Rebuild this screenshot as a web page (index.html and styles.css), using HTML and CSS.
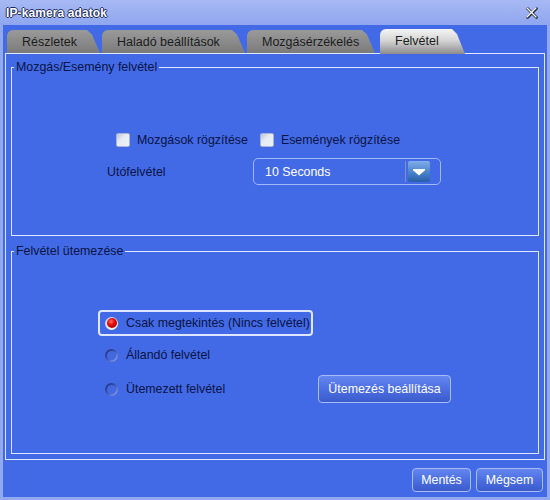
FILE: index.html
```html
<!DOCTYPE html>
<html lang="hu">
<head>
<meta charset="utf-8">
<title>IP-kamera adatok</title>
<link rel="stylesheet" href="styles.css">
</head>
<body>
<div class="window">
  <div class="titlebar">
    <span class="title">IP-kamera adatok</span>
    <svg class="close" width="12" height="12" viewBox="0 0 12 12">
      <path d="M1.5 1.5 L10.5 10.5 M10.5 1.5 L1.5 10.5" stroke="#1a1f3a" stroke-width="2.6" stroke-linecap="round"/>
      <path d="M1 1 L10 10 M10 1 L1 10" stroke="#ffffff" stroke-width="1.3" stroke-linecap="round"/>
    </svg>
  </div>
  <div class="client">
    <div class="tabs">
      <div class="tab tab-1">Részletek</div>
      <div class="tab tab-2">Haladó beállítások</div>
      <div class="tab tab-3">Mozgásérzékelés</div>
      <div class="tab tab-4 active">Felvétel</div>
    </div>
    <div class="panel">
      <fieldset class="group group-motion">
        <legend>Mozgás/Esemény felvétel</legend>
        <div class="check-row">
          <label class="check"><span class="box"></span>Mozgások rögzítése</label>
          <label class="check"><span class="box"></span>Események rögzítése</label>
        </div>
        <div class="select-row">
          <span class="select-label">Utófelvétel</span>
          <div class="select">
            <span class="select-value">10 Seconds</span>
            <span class="select-sep"></span>
            <span class="select-btn">
              <svg width="22" height="21" viewBox="0 0 22 21"><polygon points="5,8 17,8 17,9.2 11,14.5 5,9.2" fill="#ffffff"/></svg>
            </span>
          </div>
        </div>
      </fieldset>
      <fieldset class="group group-schedule">
        <legend>Felvétel ütemezése</legend>
        <div class="radios">
          <div class="radio-item focused"><span class="radio checked"></span>Csak megtekintés (Nincs felvétel)</div>
          <div class="radio-item"><span class="radio"></span>Állandó felvétel</div>
          <div class="radio-row">
            <div class="radio-item"><span class="radio"></span>Ütemezett felvétel</div>
            <button class="btn btn-schedule">Ütemezés beállítása</button>
          </div>
        </div>
      </fieldset>
    </div>
    <div class="actions">
      <button class="btn btn-save">Mentés</button>
      <button class="btn btn-cancel">Mégsem</button>
    </div>
  </div>
</div>
</body>
</html>
```
FILE: styles.css
```css
* { box-sizing: border-box; }
html, body { margin: 0; padding: 0; }
body {
  font-family: "Liberation Sans", Arial, sans-serif;
  font-size: 12.4px;
  color: #0a1445;
  background: #93a9ef;
}
.window {
  width: 550px;
  height: 500px;
  background: #93a9ef;
  padding: 0 3px 3px 3px;
  display: flex;
  flex-direction: column;
}
.titlebar {
  height: 25px;
  flex: none;
  display: flex;
  align-items: center;
  justify-content: space-between;
  background: linear-gradient(#a7b9f4, #8fa6ef);
  margin: 0 -3px;
  padding-left: 6px;
  padding-right: 12px;
}
.title {
  color: #ffffff;
  font-weight: bold;
  font-size: 12px;
  letter-spacing: 0.1px;
  text-shadow: 1px 0 #1f2b5e, -1px 0 #1f2b5e, 0 1px #1f2b5e, 0 -1px #1f2b5e;
}
.close { display: block; }
.client {
  flex: 1;
  background: #436ae6;
  display: flex;
  flex-direction: column;
}
.tabs {
  display: flex;
  align-items: flex-end;
  height: 24px;
  margin-top: 4px;
  margin-left: 4px;
}
.tab {
  height: 23px;
  display: flex;
  align-items: center;
  padding-left: 15px;
  font-size: 12.5px;
  color: #1c1c1c;
  background: linear-gradient(#9a9a9a, #7b7b7b);
  border-radius: 6px 0 0 0;
  clip-path: polygon(0 0, calc(100% - 13px) 0, calc(100% - 8px) 20%, 100% 100%, 0 100%);
}
.tab-1 { width: 93px; margin-right: 2px; }
.tab-2 { width: 143px; margin-right: 2px; }
.tab-3 { width: 128px; margin-right: 5px; }
.tab-4 { width: 85px; }
.tab.active {
  height: 25px;
  margin-bottom: -1px;
  position: relative;
  z-index: 1;
  padding-bottom: 2px;
  background: linear-gradient(#f4f4f4, #d6d6d6 45%, #8c8c8c);
}
.panel {
  height: 407px;
  margin: 0 2px;
  border: 1px solid #dfe6ff;
  padding: 6px 5px 5px 5px;
  display: flex;
  flex-direction: column;
}
.group {
  margin: 0;
  padding: 0;
  border: 1px solid #dfe6ff;
  min-width: 0;
}
.group legend {
  margin-left: 2px;
  padding: 0 2px;
  line-height: 14px;
  color: #0a1445;
}
.group-motion { height: 176px; }
.group-schedule { height: 210px; margin-top: 8px; }
.check-row {
  display: flex;
  margin-top: 59px;
  margin-left: 104px;
  height: 14px;
  gap: 12px;
}
.check {
  display: flex;
  align-items: center;
  gap: 7px;
  line-height: 14px;
}
.box {
  width: 14px;
  height: 14px;
  border-radius: 2px;
  background: linear-gradient(135deg, #b9c2da, #e6eaf3 40%, #eef1f8);
  border: 1px solid #aab5d4;
}
.select-row {
  display: flex;
  align-items: center;
  margin-top: 11px;
  margin-left: 95px;
  height: 27px;
}
.select-label { width: 146px; }
.select {
  width: 188px;
  height: 27px;
  border: 1px solid #a2b7f5;
  border-radius: 5px;
  display: flex;
  align-items: center;
  padding: 0 10px 0 11px;
}
.select-value {
  flex: 1;
  color: #ffffff;
}
.select-sep {
  width: 1px;
  height: 21px;
  background: #7d90c4;
  margin-right: 2px;
}
.select-btn {
  width: 22px;
  height: 21px;
  border-radius: 2px;
  background: linear-gradient(#82ade8, #4d86d0 50%, #275ea8);
}
.select-btn svg { display: block; }
.radios {
  margin-top: 52px;
  margin-left: 86px;
  display: flex;
  flex-direction: column;
  gap: 6px;
}
.radio-item {
  width: 215px;
  height: 26px;
  border: 2px solid transparent;
  border-radius: 4px;
  padding-left: 5px;
  display: flex;
  align-items: center;
  gap: 8px;
}
.radio-item.focused { border-color: #dfe6ff; }
.radio-row {
  display: flex;
  align-items: center;
  gap: 5px;
  margin-top: 1px;
}
.radio {
  width: 13px;
  height: 13px;
  border-radius: 50%;
  flex: none;
  padding: 2px;
  background: linear-gradient(135deg, #1a2966 0%, #3e58b8 50%, #9fb2f3 100%);
}
.radio::after {
  content: "";
  display: block;
  width: 9px;
  height: 9px;
  border-radius: 50%;
  background: #4268e2;
}
.radio.checked {
  padding: 1.5px;
  background: linear-gradient(135deg, #c5cde2, #ffffff);
}
.radio.checked::after {
  width: 10px;
  height: 10px;
  background: radial-gradient(circle at 40% 35%, #ff6a6a 0%, #e00000 45%, #8a0000 100%);
}
.btn {
  font-family: "Liberation Sans", Arial, sans-serif;
  font-size: 12.4px;
  color: #ffffff;
  border: 1px solid #a8bbf5;
  border-radius: 4px;
  background: linear-gradient(#6486f0, #4a6ddf 55%, #3a5bcc);
  padding: 0;
  cursor: pointer;
}
.btn-schedule { width: 133px; height: 28px; }
.actions {
  display: flex;
  justify-content: flex-end;
  gap: 5px;
  margin-top: 8px;
  margin-right: 4px;
  height: 24px;
}
.btn-save { width: 59px; height: 24px; }
.btn-cancel { width: 67px; height: 24px; }
```
